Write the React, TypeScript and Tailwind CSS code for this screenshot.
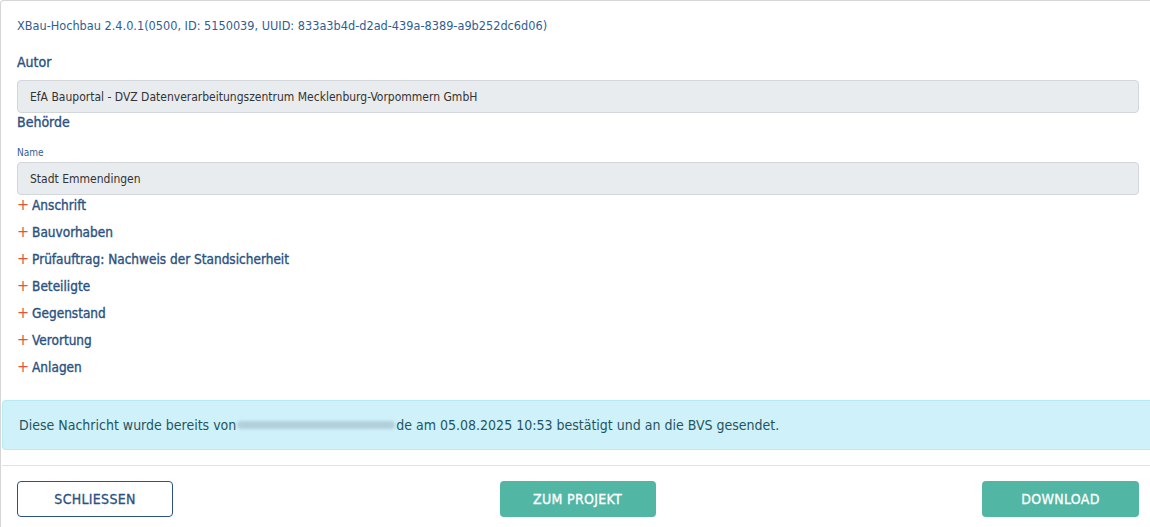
const SECTIONS = [
  "Anschrift",
  "Bauvorhaben",
  "Prüfauftrag: Nachweis der Standsicherheit",
  "Beteiligte",
  "Gegenstand",
  "Verortung",
  "Anlagen",
]

const font = { fontFamily: "'DejaVu Sans Condensed', 'Liberation Sans Narrow', Roboto, sans-serif" }

function ReadonlyField({ value }: { value: string }) {
  return (
    <div className="flex h-[33px] items-center rounded-[4px] border border-[#d3d6da] bg-[#e9ecef] px-[12px] text-[12px] text-[#333]">
      {value}
    </div>
  )
}

export default function App() {
  return (
    <div className="h-[527px] w-full overflow-hidden bg-white" style={font}>
      <div className="flex h-full flex-col rounded-tl-[4px] border-l border-t border-[#d6d6d6]">
        <div className="pl-[16px] pr-[11px] pt-[15px]">
          {/* Kopf */}
          <div className="h-[20px] text-[12.6px] leading-[20px] text-[#2f5e93]">
            XBau-Hochbau 2.4.0.1(0500, ID: 5150039, UUID: 833a3b4d-d2ad-439a-8389-a9b252dc6d06)
          </div>

          <div className="mt-[16px] h-[20px] text-[14px] leading-[20px] text-[#2b5281] [-webkit-text-stroke:0.35px_#2b5281]">
            Autor
          </div>
          <div className="mt-[8px]">
            <ReadonlyField value="EfA Bauportal - DVZ Datenverarbeitungszentrum Mecklenburg-Vorpommern GmbH" />
          </div>

          <div className="h-[18px] text-[14px] leading-[18px] text-[#2b5281] [-webkit-text-stroke:0.35px_#2b5281]">
            Behörde
          </div>
          <div className="mt-[15px] h-[14px] text-[10px] leading-[14px] text-[#2f5e93]">Name</div>
          <div className="mt-[2px]">
            <ReadonlyField value="Stadt Emmendingen" />
          </div>

          {/* Aufklappbare Abschnitte */}
          <div className="flex flex-col gap-[7px]">
            {SECTIONS.map((s) => (
              <div key={s} className="flex h-[20px] items-center gap-[3px] text-[13.5px] leading-[20px] text-[#2b5281]">
                <span className="text-[16px] text-[#e0533f]">+</span>
                <span className="[-webkit-text-stroke:0.35px_#2b5281]">{s}</span>
              </div>
            ))}
          </div>
        </div>

        {/* Hinweis */}
        <div className="ml-[1px] mt-[23px] flex h-[50px] items-center rounded-l-[4px] border border-r-0 border-[#b9eaf4] bg-[#cff1f9] pl-[16px] text-[14px] text-[#1f5563]">
          Diese Nachricht wurde bereits von
          <span className="mx-[1px] inline-block h-[8px] w-[158px] rounded-sm bg-[#9fb9c9] opacity-60 blur-[1.5px]" />
          de am 05.08.2025 10:53 bestätigt und an die BVS gesendet.
        </div>

        {/* Fußzeile */}
        <div className="ml-[1px] mt-[15px] flex items-center justify-between border-t border-[#dee2e6] pb-[10px] pl-[15px] pr-[11px] pt-[15px]">
          <button className="h-[36px] w-[156px] rounded-[4px] border border-[#2b5281] bg-white text-[14px] uppercase tracking-[0.3px] text-[#2b5281] [-webkit-text-stroke:0.3px_#2b5281]">
            Schliessen
          </button>
          <button className="h-[36px] w-[156px] rounded-[4px] bg-[#52b6a5] text-[14px] uppercase tracking-[0.3px] text-white [-webkit-text-stroke:0.3px_#fff]">
            Zum Projekt
          </button>
          <button className="h-[36px] w-[157px] rounded-[4px] bg-[#52b6a5] text-[14px] uppercase tracking-[0.3px] text-white [-webkit-text-stroke:0.3px_#fff]">
            Download
          </button>
        </div>
      </div>
    </div>
  )
}
